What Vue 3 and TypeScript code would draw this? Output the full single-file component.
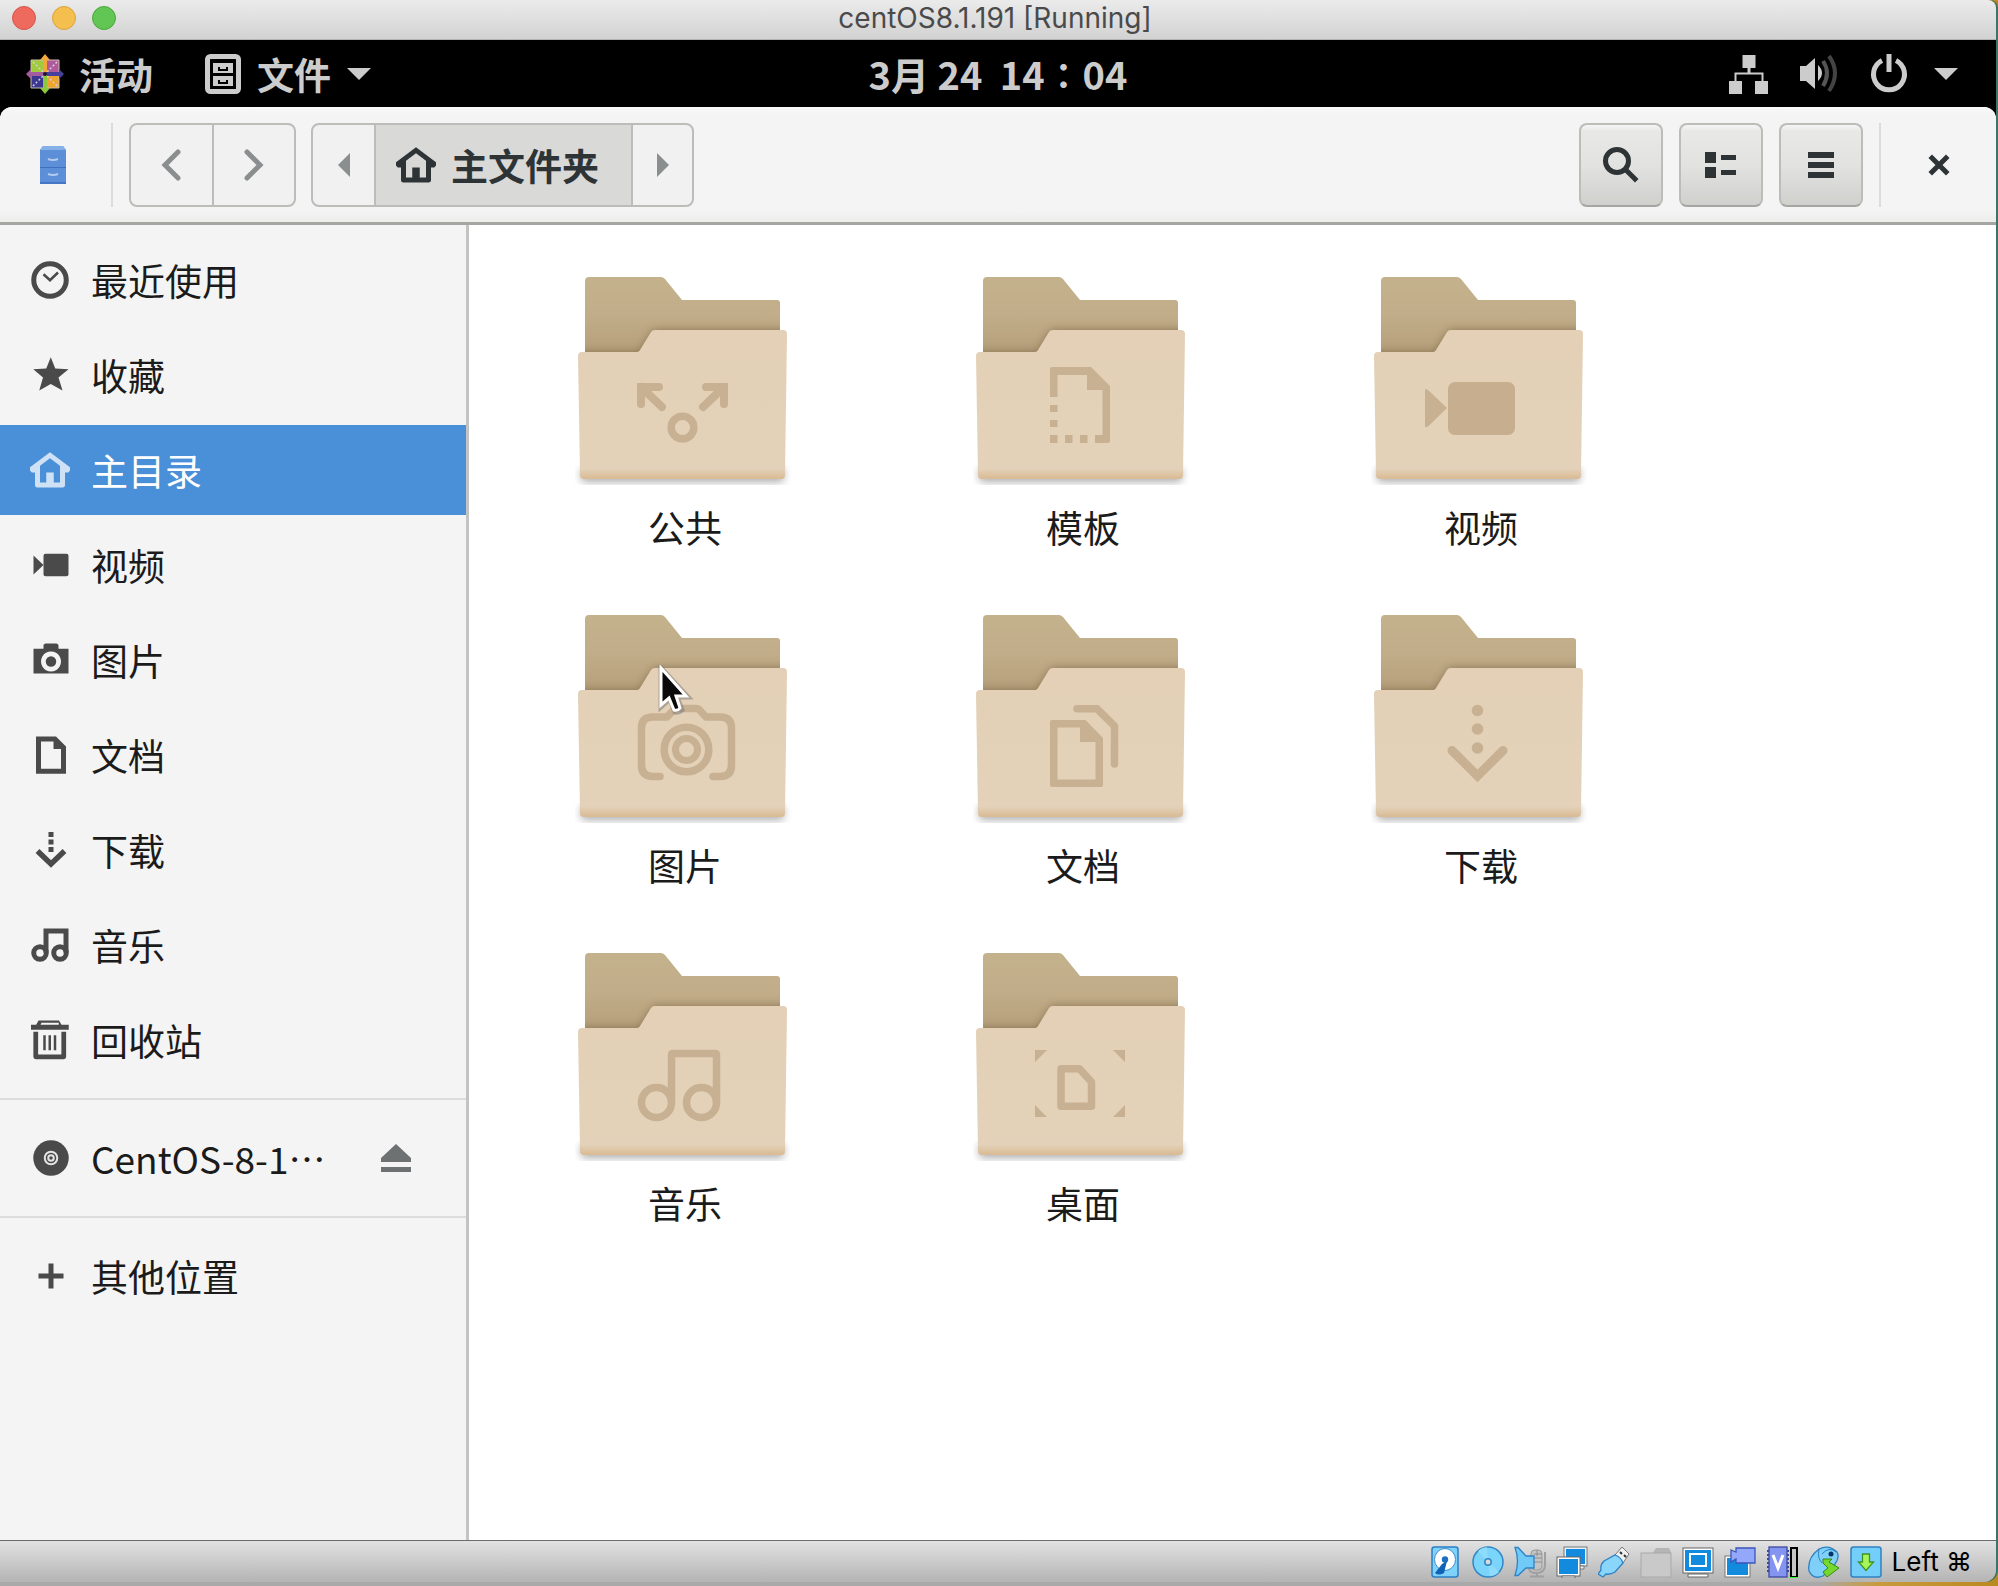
<script setup lang="ts">
interface Place {
  id: string
  label: string
  icon: string
}

interface Folder {
  id: string
  label: string
  emblem: string
  pointer?: boolean
}

const icons: Record<string, string> = {
  recent:
    '<circle cx="8" cy="8" r="6.5" fill="none" stroke="currentColor" stroke-width="2"/><path d="M5.4 5.7 8 8.1 11.2 5" fill="none" stroke="currentColor" stroke-width="1"/>',
  star: '<path d="M8.3.9 10.1 5.4 15.4 5.7 11.4 9 13 14.2 8.3 11.6 3.7 14.2 5.2 9 1.3 5.7 6.5 5.4Z" fill="currentColor"/>',
  home: '<path d="M8 .9 0 6.9v1.3l.7.8h1.3v5.1c0 .5.4.9.9.9h10.2c.5 0 .9-.4.9-.9V9h1.3l.7-.8V6.9Z M8 3.3 12 6.3V13H9.5V9h-3v4H4V6.3Z" fill="currentColor" fill-rule="evenodd"/>',
  video:
    '<rect x="5.4" y="3.5" width="10" height="9" rx=".8" fill="currentColor"/><path d="M1.4 4.2v7.6L5.4 8Z" fill="currentColor"/>',
  camera:
    '<path d="M1.4 3.5h4V2.3c0-.5.4-.9.9-.9h4.2c.5 0 .9.4.9.9v1.2h4v9.9h-14Z M8.4 4.6a4 4 0 1 0 .01 0Z" fill="currentColor" fill-rule="evenodd"/><circle cx="8.4" cy="8.6" r="2.1" fill="currentColor"/>',
  document:
    '<path d="M2.4.6h8l4 4v10.9h-12Z M4.4 2.6v10.9h8V5.6h-3v-3Z" fill="currentColor" fill-rule="evenodd"/>',
  download:
    '<path d="M7.4.8h2v2h-2Zm0 3h2v2h-2Zm0 3h2v2h-2Z" fill="currentColor"/><path d="M3 8.4 8.4 13.6 13.8 8.4" fill="none" stroke="currentColor" stroke-width="2.2"/>',
  music:
    '<path d="M6.4 11V2.4h8V11" fill="none" stroke="currentColor" stroke-width="2"/><circle cx="4" cy="11.2" r="2.5" fill="none" stroke="currentColor" stroke-width="2"/><circle cx="12" cy="11.2" r="2.5" fill="none" stroke="currentColor" stroke-width="2"/>',
  trash:
    '<path d="M.4 1.9h2.1L3.4.2h8.2l1 1.7h2.9v2H.4Z M4.2 1.9h7.3v-.8H4.6Z" fill="currentColor" fill-rule="evenodd"/><path d="M2.3 4.7v10h11.2v-10" fill="none" stroke="currentColor" stroke-width="1.9" stroke-linejoin="round"/><path d="M5.8 6.1v6M7.9 6.1v6M10 6.1v6" stroke="currentColor" stroke-width="1" fill="none"/>',
  disc: '<circle cx="8.4" cy="8" r="7.1" fill="currentColor"/><circle cx="8.4" cy="8" r="2.5" fill="none" stroke="#e4e4e4" stroke-width=".8"/><circle cx="8.4" cy="8" r="1.1" fill="none" stroke="#e4e4e4" stroke-width=".8"/>',
  plus: '<path d="M7.4 3h2v4h4v2h-4v4h-2V9h-4V7h4Z" fill="currentColor"/>',
}

const places: Place[] = [
  { id: 'recent', label: '最近使用', icon: 'recent' },
  { id: 'starred', label: '收藏', icon: 'star' },
  { id: 'home', label: '主目录', icon: 'home' },
  { id: 'videos', label: '视频', icon: 'video' },
  { id: 'pictures', label: '图片', icon: 'camera' },
  { id: 'documents', label: '文档', icon: 'document' },
  { id: 'downloads', label: '下载', icon: 'download' },
  { id: 'music', label: '音乐', icon: 'music' },
  { id: 'trash', label: '回收站', icon: 'trash' },
]

const folders: Folder[] = [
  {
    id: 'public',
    label: '公共',
    emblem:
      '<path d="M84 115H66V132M66 115 87 135M131 115H149V132M149 115 128 135" fill="none" stroke="#c8b092" stroke-width="8" stroke-linecap="round"/><path d="M62 111h8v8h-8ZM145 111h8v8h-8Z" fill="#c8b092"/><circle cx="107.5" cy="155.5" r="11.3" fill="none" stroke="#c8b092" stroke-width="7.5"/>',
  },
  {
    id: 'templates',
    label: '模板',
    emblem:
      '<path d="M77 97q0-2 2-2H118L137 114V169q0 2-2 2H122v-8h7.5V118H114V103H84.5V125H77ZM77 133h7.5v7H77Zm0 15h7.5v7H77Zm0 15h7.5v8H77Zm15 0h7.5v8H92Zm15 0h7.5v8H107Z" fill="#c8b092"/>',
  },
  {
    id: 'videos',
    label: '视频',
    emblem:
      '<rect x="77" y="110" width="67" height="53" rx="7" fill="#c6ae8f"/><path d="M54 117.5q2-.5 3 .5L76 136 57 154.5q-2 1-3 .5Z" fill="#c8b092"/>',
  },
  {
    id: 'pictures',
    label: '图片',
    pointer: true,
    emblem:
      '<path d="M85 166.5H78Q66.5 166.5 66.5 155V118Q66.5 107 78 107H92L99 99.5Q100 98.5 102 98.5H121Q123 98.5 124 99.5L131 107H145Q156.5 107 156.5 118V155Q156.5 166.5 145 166.5H138" fill="none" stroke="#c8b092" stroke-width="7.5" stroke-linecap="round" stroke-linejoin="round"/><circle cx="111.5" cy="139.5" r="22.3" fill="none" stroke="#c8b092" stroke-width="7.5"/><circle cx="111.5" cy="139.5" r="11" fill="none" stroke="#c8b092" stroke-width="7"/>',
  },
  {
    id: 'documents',
    label: '文档',
    emblem:
      '<path d="M77 112q0-2 2-2h33.5L130 128V175q0 2-2 2H79q-2 0-2-2ZM84.5 117.5V169.5H122.5V132H107V117.5Z" fill="#c8b092" fill-rule="evenodd"/><path d="M104 98.8H124L141.5 116V154" fill="none" stroke="#c8b092" stroke-width="7.5" stroke-linecap="round"/>',
  },
  {
    id: 'downloads',
    label: '下载',
    emblem:
      '<circle cx="106.5" cy="100.5" r="5.8" fill="#c8b092"/><circle cx="106.5" cy="119" r="5.8" fill="#c8b092"/><circle cx="106.5" cy="138" r="5.8" fill="#c8b092"/><path d="M81 140.5 106.5 166 132 140.5" fill="none" stroke="#c8b092" stroke-width="9" stroke-linecap="round"/>',
  },
  {
    id: 'music',
    label: '音乐',
    emblem:
      '<path d="M96.5 154V107q0-1.5 1.5-1.5H140q1.5 0 1.5 1.5V154" fill="none" stroke="#c8b092" stroke-width="7.5"/><circle cx="81.5" cy="154.5" r="15" fill="none" stroke="#c8b092" stroke-width="7.5"/><circle cx="126.5" cy="154.5" r="15" fill="none" stroke="#c8b092" stroke-width="7.5"/>',
  },
  {
    id: 'desktop',
    label: '桌面',
    emblem:
      '<path d="M88 120.8h18.5L118.5 134V158.2H88Z" fill="none" stroke="#c8b092" stroke-width="7.5" stroke-linejoin="round"/><path d="M62 102h12l-12 12ZM152 102v12l-12-12ZM62 169v-12l12 12ZM152 169h-12l12-12Z" fill="#c8b092"/>',
  },
]

const devices = [
  {
    name: 'Hard disk',
    art: '<rect x="2" y="1" width="26" height="30" rx="2.5" fill="#7fd3fb" stroke="#2b7fc4" stroke-width="1.5"/><ellipse cx="15" cy="13.5" rx="10.5" ry="11" fill="#fff" stroke="#3a8ccc"/><circle cx="15" cy="13.5" r="3.2" fill="#1d6fc0"/><path d="M17 15 12 18 5 27q4 3 9 0l2-8Z" fill="#0f62b5"/>',
  },
  {
    name: 'Optical drive',
    art: '<circle cx="16" cy="16" r="15" fill="#7bd5fb" stroke="#3187c6" stroke-width="1.5"/><path d="M16 16 6 5a15 15 0 0 1 9-3.8ZM16 16 27 26a15 15 0 0 1-9 4.3Z" fill="#8fdbfb"/><circle cx="16" cy="16" r="3.2" fill="#d9d9d9" stroke="#3187c6" stroke-width="1.5"/>',
  },
  {
    name: 'Audio',
    art: '<rect x="17" y="4" width="11" height="20" rx="4" fill="#c4c4c4" stroke="#999"/><path d="M20 8h8M20 12h8M20 16h8M23 4v6" stroke="#8d8d8d" fill="none"/><path d="M15 23q1 4 7 4 9 0 9-8V6M23 27v3M16 30.5h14" stroke="#a0a0a0" stroke-width="2" fill="none"/><path d="M1 1.5h3L12 10h8v12h-8L4 29.5H1Q6 15 1 1.5Z" fill="#6fcaf8" stroke="#2f82c3" stroke-width="1.3"/>',
  },
  {
    name: 'Network',
    art: '<rect x="8" y="1" width="23" height="19" fill="#e9f2f8" stroke="#777"/><rect x="10" y="3" width="19" height="15" fill="#128ade"/><path d="M20 20h8v3h-8Z" fill="#eee" stroke="#777"/><rect x="1" y="11" width="23" height="19" fill="#fff" stroke="#666"/><rect x="3" y="13" width="19" height="15" fill="#128ade"/><path d="M6 30h13v2H6Z" fill="#fff" stroke="#666"/>',
  },
  {
    name: 'USB',
    art: '<path d="m17 9 7-8 7 7-6 9Z" fill="#f1f1f1" stroke="#777"/><path d="m22 6 2 2m2 1 2 2" stroke="#333" stroke-width="2"/><path d="M17 9q6 2 8 8l-8 9q-5 3-9 2l-3 3-5-3 3-4q-1-5 3-9Z" fill="#8ad5fa" stroke="#2f82c3" stroke-width="1.3"/>',
  },
  {
    name: 'Shared folders',
    art: '<path d="M1 8h11l4-6h13l2 4v24H1Z" fill="#b5b5b5"/><rect x="1" y="7" width="30" height="24" fill="#c9c9c9" stroke="#a9a9a9"/>',
  },
  {
    name: 'Display',
    art: '<rect x="1" y="2" width="30" height="25" fill="#fff" stroke="#666"/><rect x="3" y="4" width="26" height="21" fill="#128ade"/><rect x="8" y="8" width="16" height="12" fill="none" stroke="#fff" stroke-width="2"/><path d="M6 28h20v3H6Z" fill="#fff" stroke="#666"/>',
  },
  {
    name: 'Recording',
    art: '<rect x="1" y="10" width="25" height="21" fill="#fff" stroke="#777"/><rect x="3" y="12" width="21" height="17" fill="#128ade"/><path d="M7 4 12 6V2h19v15H12v-4l-5 3Z" fill="#93a8fb" stroke="#3c56b8" stroke-width="1.3"/>',
  },
  {
    name: 'Processor',
    art: '<path d="M1 5h22M1 9h22M1 13h22M1 17h22M1 21h22M1 25h22" stroke="#3d4a9e" stroke-width="2"/><rect x="3" y="1" width="18" height="30" fill="#8494f1" stroke="#3d4a9e" stroke-width="1.3"/><path d="m7 9 5 13 5-13" fill="none" stroke="#fff" stroke-width="3"/><rect x="25" y="2" width="6" height="29" fill="#c6c6c6" stroke="#000" stroke-width="2"/><path d="M24 31.5h8" stroke="#2f2"/>',
  },
  {
    name: 'Mouse integration',
    art: '<path d="M11 3Q21-2 29 6q3 5-2 12L15 30Q5 34 1 25-1 12 11 3Z" fill="#7ed0f8" stroke="#2f82c3" stroke-width="1.3"/><path d="M11 3q-2 9 3 14M14 8q7-8 14-2" fill="none" stroke="#2f82c3"/><circle cx="23" cy="8" r="2.5" fill="#063468"/><path d="M15 13h9l-3 3 10 6-12 9-4-5 5-4-5-5Z" fill="#76d82c" stroke="#348a18"/>',
  },
  {
    name: 'Keyboard capture',
    art: '<rect x="1" y="1" width="30" height="30" rx="2.5" fill="#74cefa" stroke="#2f82c3" stroke-width="1.5"/><path d="M12.5 8h7v8h4L16 24.5 8.5 16h4Z" fill="#a8f55a" stroke="#3f9420" stroke-width="1.3"/>',
  },
]
</script>

<template>
  <div class="desktop">
    <div class="vm">
      <header class="titlebar">
        <div class="lights">
          <button class="light red" aria-label="Close"></button>
          <button class="light yellow" aria-label="Minimize"></button>
          <button class="light green" aria-label="Zoom"></button>
        </div>
        <h1 class="title">centOS8.1.191 [Running]</h1>
      </header>

      <div class="guest">
        <div class="shellbar">
          <div class="shell-left">
            <button class="shell-btn activities">
              <svg width="38" height="40" viewBox="0 0 38 40" aria-hidden="true">
                <rect x="5" y="6" width="13" height="13" fill="#9fcb3c" />
                <rect x="20" y="6" width="13" height="13" fill="#b05a9c" />
                <rect x="5" y="21" width="13" height="13" fill="#3b3690" />
                <rect x="20" y="21" width="13" height="13" fill="#efa42e" />
                <path d="M5 19V6h13M20 6h13v13M33 21v13H20M18 34H5V21" fill="none" stroke="#cbbfae" stroke-width="1" />
                <path d="M7 8 31 32M31 8 7 32" stroke="#d8cfd8" stroke-width="1.5" stroke-dasharray="2 2" />
                <path d="M19 0 24 6H21V19H17V6H14Z" fill="#f2a73a" />
                <path d="M38 20 33 25V22H20V18H33V15Z" fill="#473f9c" />
                <path d="M19 40 14 34H17V21H21V34H24Z" fill="#8dc63f" />
                <path d="M0 20 5 15V18H18V22H5V25Z" fill="#a35c9c" />
                <circle cx="19" cy="20" r="2" fill="#1d1430" />
              </svg>
              <span>活动</span>
            </button>
            <button class="shell-btn appmenu">
              <svg width="36" height="40" viewBox="0 0 36 40" aria-hidden="true">
                <rect x="2.5" y="2.5" width="31" height="35" rx="3" fill="none" stroke="#ccc" stroke-width="5" />
                <path d="M8 9h20v10H8ZM8 22h20v10H8Z" fill="#ccc" />
                <path d="M14 13v3h8v-3M14 26v3h8v-3" fill="none" stroke="#000" stroke-width="2" />
              </svg>
              <span>文件</span>
              <svg class="caret" width="24" height="14" viewBox="0 0 24 14" aria-hidden="true">
                <path d="M0 1h24L12 13Z" fill="#ccc" />
              </svg>
            </button>
          </div>
          <button class="shell-btn clock">3月 24&nbsp; 14∶04</button>
          <button class="shell-btn tray" aria-label="System">
            <svg width="40" height="40" viewBox="0 0 40 40" aria-hidden="true">
              <path
                d="M13.5 1h13v13H21.5v4.5H34.5V27H39V40H26V27h6.5V20.5H7.5V27H13V40H0V27H5.5V18.5H18.5V14H13.5Z"
                fill="#ccc"
              />
            </svg>
            <svg width="40" height="40" viewBox="0 0 40 40" aria-hidden="true">
              <path d="M1 12h6l9-8v31l-9-8H1Z" fill="#ccc" />
              <path d="M19 11q8 8 0 16Z" fill="#ccc" />
              <path d="M24 7q8 12 0 25" fill="none" stroke="#555" stroke-width="4" />
              <path d="M30 2q12 17 0 35" fill="none" stroke="#444" stroke-width="4" />
            </svg>
            <svg width="40" height="40" viewBox="0 0 40 40" aria-hidden="true">
              <path d="M13 6.5A15.5 15.5 0 1 0 27 6.5" fill="none" stroke="#ccc" stroke-width="5" />
              <path d="M20 0v18" stroke="#ccc" stroke-width="5" />
            </svg>
            <svg class="caret" width="24" height="14" viewBox="0 0 24 14" aria-hidden="true">
              <path d="M0 1h24L12 13Z" fill="#ccc" />
            </svg>
          </button>
        </div>

        <div class="files">
          <div class="headerbar">
            <div class="app-icon">
              <svg width="28" height="40" viewBox="0 0 28 40" aria-hidden="true">
                <path d="M4 1h20l3 4v34H1V5Z" fill="#5c8fd8" />
                <path d="M4 1h20l3 4H1Z" fill="#86b0e8" />
                <path d="M1 22h26v1H1Z" fill="#3f70bd" />
                <path d="M1 37h26v2H1Z" fill="#4478c6" />
                <path d="M9 14q5 2 10 0M9 29q5 2 10 0" fill="none" stroke="#b3cbea" stroke-width="2" />
              </svg>
            </div>
            <span class="rule"></span>
            <div class="group nav">
              <button aria-label="Back">
                <svg width="20" height="32" viewBox="0 0 20 32" aria-hidden="true">
                  <path d="M17 3 4 16 17 29" fill="none" stroke="#8b8e8f" stroke-width="5" stroke-linecap="round" />
                </svg>
              </button>
              <button aria-label="Forward">
                <svg width="20" height="32" viewBox="0 0 20 32" aria-hidden="true">
                  <path d="M3 3 16 16 3 29" fill="none" stroke="#8b8e8f" stroke-width="5" stroke-linecap="round" />
                </svg>
              </button>
            </div>
            <div class="group path">
              <button class="step" aria-label="Parent">
                <svg width="12" height="24" viewBox="0 0 12 24" aria-hidden="true">
                  <path d="M12 0v24L0 12Z" fill="#8b8e8f" />
                </svg>
              </button>
              <button class="crumb">
                <svg width="40" height="40" viewBox="0 0 16 16" aria-hidden="true" v-html="icons.home"></svg>
                <span>主文件夹</span>
              </button>
              <button class="step" aria-label="Child">
                <svg width="12" height="24" viewBox="0 0 12 24" aria-hidden="true">
                  <path d="M0 0v24L12 12Z" fill="#8b8e8f" />
                </svg>
              </button>
            </div>
            <div class="actions">
              <button class="tool" aria-label="Search">
                <svg width="40" height="40" viewBox="0 0 40 40" aria-hidden="true">
                  <circle cx="16" cy="16" r="11.5" fill="none" stroke="#2e3436" stroke-width="5" />
                  <path d="m25 25 9 9" stroke="#2e3436" stroke-width="5" stroke-linecap="square" />
                </svg>
              </button>
              <button class="tool" aria-label="List view">
                <svg width="32" height="26" viewBox="0 0 32 26" aria-hidden="true">
                  <path d="M0 0h11v11H0ZM0 15h11v11H0ZM16 3h15v5H16ZM16 18h15v5H16Z" fill="#2e3436" />
                </svg>
              </button>
              <button class="tool" aria-label="Menu">
                <svg width="26" height="26" viewBox="0 0 26 26" aria-hidden="true">
                  <path d="M0 0h26v6H0ZM0 10h26v6H0ZM0 20h26v6H0Z" fill="#2e3436" />
                </svg>
              </button>
            </div>
            <span class="rule"></span>
            <button class="close" aria-label="Close window">
              <svg width="22" height="22" viewBox="0 0 22 22" aria-hidden="true">
                <path d="M4 4 18 18M18 4 4 18" stroke="#2e3436" stroke-width="5" stroke-linecap="square" />
              </svg>
            </button>
          </div>

          <div class="body">
            <nav class="sidebar">
              <a
                v-for="place in places"
                :key="place.id"
                href="#"
                class="place"
                :class="{ selected: place.id === 'home' }"
              >
                <svg width="40" height="40" viewBox="0 0 16 16" aria-hidden="true" v-html="icons[place.icon]"></svg>
                <span>{{ place.label }}</span>
              </a>
              <hr />
              <div class="place">
                <svg width="40" height="40" viewBox="0 0 16 16" aria-hidden="true" v-html="icons.disc"></svg>
                <a href="#" class="volume">CentOS-8-1<span class="dots" lang="ja">…</span></a>
                <button class="eject" aria-label="Eject">
                  <svg width="30" height="28" viewBox="0 0 30 28" aria-hidden="true">
                    <path d="M15 0 30 14v4H0v-4ZM0 23h30v5H0Z" fill="#6d7172" />
                  </svg>
                </button>
              </div>
              <hr />
              <a href="#" class="place">
                <svg width="40" height="40" viewBox="0 0 16 16" aria-hidden="true" v-html="icons.plus"></svg>
                <span>其他位置</span>
              </a>
            </nav>

            <main class="content">
              <div v-for="folder in folders" :key="folder.id" class="folder">
                <svg width="220" height="220" viewBox="0 0 220 220" aria-hidden="true">
                  <defs>
                    <linearGradient :id="'back-' + folder.id" x1="0" y1="0" x2="0" y2="1">
                      <stop offset="0" stop-color="#c4b28d" />
                      <stop offset=".45" stop-color="#c1ad89" />
                      <stop offset="1" stop-color="#b39b78" />
                    </linearGradient>
                    <linearGradient :id="'front-' + folder.id" x1="0" y1="0" x2="0" y2="1">
                      <stop offset="0" stop-color="#e3d0b6" />
                      <stop offset=".93" stop-color="#e3d2b9" />
                      <stop offset="1" stop-color="#d9ba93" />
                    </linearGradient>
                    <clipPath :id="'clip-' + folder.id">
                      <path d="M10 9q0-4 4-4H86q2 0 4 2L107 28H202q3 0 3 3V90H10Z" />
                    </clipPath>
                    <filter :id="'soft-' + folder.id" x="-20%" y="-20%" width="140%" height="140%">
                      <feGaussianBlur stdDeviation="4" />
                    </filter>
                  </defs>
                  <rect x="6" y="196" width="203" height="14" rx="4" fill="#000" opacity=".32" :filter="`url(#soft-${folder.id})`" />
                  <g :clip-path="`url(#clip-${folder.id})`">
                    <rect x="10" y="5" width="195" height="85" :fill="`url(#back-${folder.id})`" />
                    <path
                      d="M3 80H64L79 58H212V110H3Z"
                      fill="#6b5533"
                      opacity=".6"
                      :filter="`url(#soft-${folder.id})`"
                    />
                  </g>
                  <path
                    d="M3 84q0-4 4-4H62q2 0 3-2L76 60q1-2 4-2H208q4 0 4 4L210 203q0 4-4 4H9q-4 0-4-4Z"
                    :fill="`url(#front-${folder.id})`"
                  />
                  <g v-html="folder.emblem"></g>
                </svg>
                <a href="#" class="folder-name">{{ folder.label }}</a>
                <svg v-if="folder.pointer" class="pointer" width="36" height="52" viewBox="0 0 36 52" aria-hidden="true">
                  <path
                    d="M3 3V42L12 34 17 47Q21 48 24 45L19 32H30Z"
                    fill="#000"
                    stroke="#777"
                    stroke-width="5"
                    opacity=".5"
                  />
                  <path d="M3 3V40L11 33 16 45Q20 46 22 43L18 31H28Z" fill="#0a0a0a" stroke="#fff" stroke-width="3" />
                </svg>
              </div>
            </main>
          </div>
        </div>
      </div>

      <footer class="statusbar">
        <svg
          v-for="device in devices"
          :key="device.name"
          width="32"
          height="32"
          viewBox="0 0 32 32"
          role="img"
          :aria-label="device.name"
          v-html="device.art"
        ></svg>
        <span class="hostkey">Left ⌘</span>
      </footer>
    </div>
  </div>
</template>

<style>
body {
  margin: 0;
}
</style>

<style scoped>
* {
  box-sizing: border-box;
}

button {
  margin: 0;
  padding: 0;
  border: 0;
  background: none;
  font: inherit;
  color: inherit;
}

a {
  color: inherit;
  text-decoration: none;
}

svg {
  display: block;
  flex: none;
}

.desktop {
  display: flex;
  min-height: 100vh;
  padding: 0 2px 4px 0;
  background: linear-gradient(to right, #a9a9a9 0 91%, #c99a3c 94%, #b98a20 100%);
  font-family: "Noto Sans CJK SC", "Noto Sans", sans-serif;
  font-size: 37px;
  line-height: 48px;
}

.vm {
  display: flex;
  flex: 1;
  flex-direction: column;
  overflow: hidden;
  border-radius: 0 8px 12px 0;
  box-shadow: 2px 0 0 #3d7466;
}

.titlebar {
  display: grid;
  grid-template-columns: 1fr auto 1fr;
  align-items: center;
  height: 40px;
  padding: 0 18px 3px 12px;
  border-bottom: 1px solid #b3b3b3;
  background: linear-gradient(#ebebeb, #d2d2d2);
}

.lights {
  display: flex;
  gap: 16px;
}

.light {
  width: 24px;
  height: 24px;
  border: 1px solid;
  border-radius: 50%;
}

.red {
  border-color: #d5564b;
  background: #ee6a5f;
}

.yellow {
  border-color: #d9a33c;
  background: #f5bf4f;
}

.green {
  border-color: #4ba83c;
  background: #61c654;
}

.title {
  margin: 0;
  color: #4a4a4a;
  font-family: Inter, "Liberation Sans", sans-serif;
  font-size: 28px;
  font-weight: 400;
  line-height: 32px;
}

.guest {
  display: flex;
  flex: 1;
  flex-direction: column;
  background: #000;
}

.shellbar {
  display: grid;
  grid-template-columns: 1fr auto 1fr;
  align-items: center;
  height: 67px;
  color: #ccc;
  font-weight: 700;
}

.shell-left,
.shell-btn {
  display: flex;
  align-items: center;
}

.shell-left {
  gap: 52px;
  padding-left: 26px;
}

.activities {
  gap: 15px;
}

.appmenu {
  gap: 16px;
}

.clock {
  font-size: 38px;
}

.tray {
  justify-self: end;
  gap: 30px;
  padding-right: 38px;
}

.tray .caret {
  margin-left: -5px;
}

.files {
  display: flex;
  flex: 1;
  flex-direction: column;
  overflow: hidden;
  border-radius: 12px 12px 0 0;
  background: #fff;
}

.headerbar {
  display: flex;
  align-items: center;
  height: 118px;
  border-bottom: 3px solid #a5a5a1;
  background: linear-gradient(#f9f9f9, #f4f4f4 8px, #f4f4f4 104px, #ececeb);
  color: #2e3436;
}

.app-icon {
  display: flex;
  justify-content: center;
  width: 106px;
}

.rule {
  width: 2px;
  height: 84px;
  background: #dcdcdb;
}

.app-icon + .rule {
  margin: 0 16px 0 5px;
}

.group {
  display: flex;
  height: 84px;
  overflow: hidden;
  border: 2px solid #bcbcb8;
  border-radius: 8px;
  background: #f1f1f1;
}

.group button {
  display: flex;
  align-items: center;
  justify-content: center;
}

.group button + button {
  border-left: 2px solid #bcbcb8;
}

.nav {
  width: 167px;
  margin-right: 15px;
}

.nav button {
  flex: 1;
}

.step {
  width: 61px;
}

.crumb {
  gap: 15px;
  padding: 0 32px 0 20px;
  background: #d9d9d7;
  font-weight: 700;
}

.actions {
  display: flex;
  gap: 16px;
  margin: 0 16px 0 auto;
}

.tool {
  display: flex;
  align-items: center;
  justify-content: center;
  width: 84px;
  height: 84px;
  border: 2px solid #bcbcb8;
  border-bottom-color: #a5a5a1;
  border-radius: 8px;
  background: linear-gradient(#f6f6f6, #e8e8e7 6px, #e2e2e1 50%, #d0d0cd);
}

.close {
  display: flex;
  justify-content: center;
  width: 115px;
}

.body {
  display: flex;
  flex: 1;
}

.sidebar {
  display: flex;
  flex: none;
  flex-direction: column;
  gap: 5px;
  width: 469px;
  padding-top: 10px;
  border-right: 3px solid #c3c3c2;
  background: #f4f4f4;
  color: #1b1b1b;
}

.sidebar hr {
  width: 100%;
  height: 2px;
  margin: 8px 0;
  border: 0;
  background: #dddddc;
}

.place {
  display: flex;
  align-items: center;
  height: 90px;
  gap: 21px;
  padding: 0 55px 0 30px;
}

.place svg {
  color: #4a4a4a;
}

.selected {
  background: #4a90d9;
  color: #fff;
}

.selected svg {
  color: #cfe1f5;
}

.volume {
  flex: 1;
}

.dots {
  font-family: "Noto Sans CJK JP", sans-serif;
}

.content {
  display: grid;
  flex: 1;
  grid-template-columns: repeat(auto-fill, 398px);
  align-content: start;
  row-gap: 59px;
  padding: 47px 0 48px 17px;
  background: #fff;
}

.folder {
  position: relative;
  display: flex;
  flex-direction: column;
  align-items: center;
  gap: 11px;
  color: #1b1b1b;
}

.pointer {
  position: absolute;
  top: 55px;
  left: 172px;
}

.statusbar {
  display: flex;
  align-items: center;
  justify-content: flex-end;
  gap: 10px;
  height: 42px;
  padding-right: 24px;
  border-top: 1px solid #6d6d6d;
  background: linear-gradient(#e2e2e2, #b4b4b4);
}

.hostkey {
  color: #000;
  font-family: Inter, "Liberation Sans", "DejaVu Sans", sans-serif;
  font-size: 26px;
  line-height: 32px;
}
</style>
